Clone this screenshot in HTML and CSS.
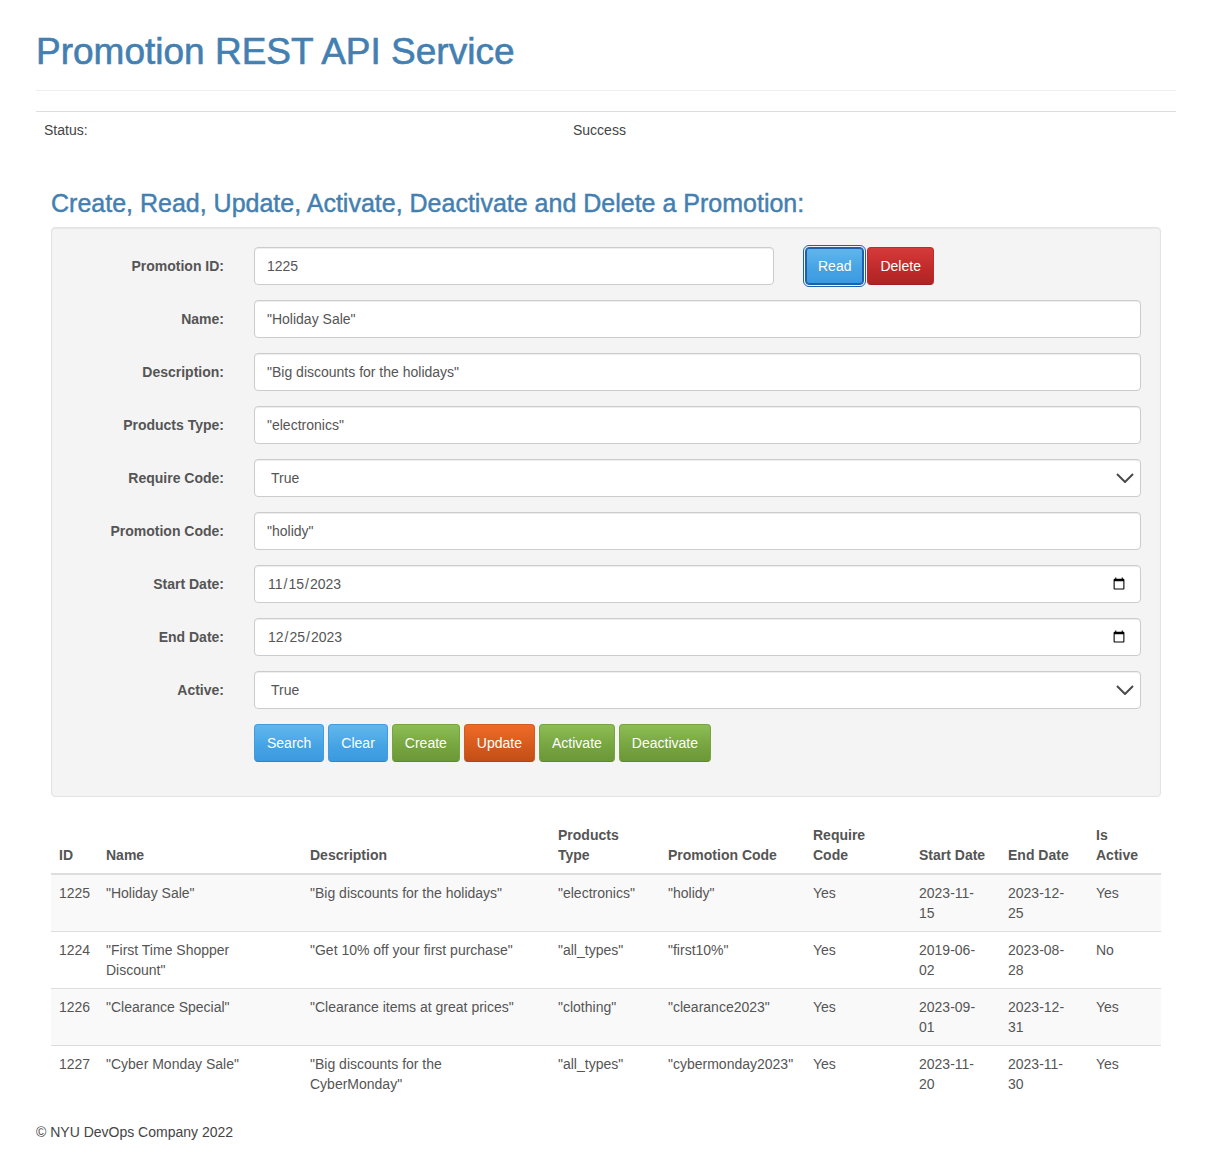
FILE: index.html
```html
<!DOCTYPE html>
<html lang="en">
<head>
<meta charset="utf-8">
<title>Promotion REST API Service</title>
<link rel="stylesheet" href="styles.css">
</head>
<body>
<div class="container">
  <div class="page-header">
    <h1>Promotion REST API Service</h1>
  </div>

  <div class="status-table">
    <div class="status-cell status-label">Status:</div>
    <div class="status-cell">Success</div>
  </div>

  <h3 class="section-title">Create, Read, Update, Activate, Deactivate and Delete a Promotion:</h3>

  <div class="well">
    <form class="form-horizontal">
      <div class="form-group">
        <label class="control-label" for="promo_id">Promotion ID:</label>
        <div class="control id-control">
          <input id="promo_id" class="form-control" type="text" value="1225">
        </div>
        <div class="id-buttons">
          <button type="button" class="btn btn-primary btn-focused">Read</button>
          <button type="button" class="btn btn-danger">Delete</button>
        </div>
      </div>

      <div class="form-group">
        <label class="control-label" for="promo_name">Name:</label>
        <div class="control">
          <input id="promo_name" class="form-control" type="text" value="&quot;Holiday Sale&quot;">
        </div>
      </div>

      <div class="form-group">
        <label class="control-label" for="promo_desc">Description:</label>
        <div class="control">
          <input id="promo_desc" class="form-control" type="text" value="&quot;Big discounts for the holidays&quot;">
        </div>
      </div>

      <div class="form-group">
        <label class="control-label" for="promo_type">Products Type:</label>
        <div class="control">
          <input id="promo_type" class="form-control" type="text" value="&quot;electronics&quot;">
        </div>
      </div>

      <div class="form-group">
        <label class="control-label" for="promo_req">Require Code:</label>
        <div class="control select-wrap">
          <select id="promo_req" class="form-control form-select">
            <option selected>True</option>
            <option>False</option>
          </select>
          <svg class="chevron" width="18" height="10" viewBox="0 0 18 10"><path d="M1 1 L9 9 L17 1" fill="none" stroke="#4a4a4a" stroke-width="2"/></svg>
        </div>
      </div>

      <div class="form-group">
        <label class="control-label" for="promo_code">Promotion Code:</label>
        <div class="control">
          <input id="promo_code" class="form-control" type="text" value="&quot;holidy&quot;">
        </div>
      </div>

      <div class="form-group">
        <label class="control-label" for="promo_start">Start Date:</label>
        <div class="control">
          <input id="promo_start" class="form-control" type="date" value="2023-11-15">
        </div>
      </div>

      <div class="form-group">
        <label class="control-label" for="promo_end">End Date:</label>
        <div class="control">
          <input id="promo_end" class="form-control" type="date" value="2023-12-25">
        </div>
      </div>

      <div class="form-group">
        <label class="control-label" for="promo_active">Active:</label>
        <div class="control select-wrap">
          <select id="promo_active" class="form-control form-select">
            <option selected>True</option>
            <option>False</option>
          </select>
          <svg class="chevron" width="18" height="10" viewBox="0 0 18 10"><path d="M1 1 L9 9 L17 1" fill="none" stroke="#4a4a4a" stroke-width="2"/></svg>
        </div>
      </div>

      <div class="form-group button-row">
        <button type="button" class="btn btn-primary">Search</button>
        <button type="button" class="btn btn-primary">Clear</button>
        <button type="button" class="btn btn-success">Create</button>
        <button type="button" class="btn btn-warning">Update</button>
        <button type="button" class="btn btn-success">Activate</button>
        <button type="button" class="btn btn-success">Deactivate</button>
      </div>
    </form>
  </div>

  <table class="results">
    <colgroup>
      <col class="c-id"><col class="c-name"><col class="c-desc"><col class="c-type"><col class="c-code"><col class="c-req"><col class="c-start"><col class="c-end"><col class="c-active">
    </colgroup>
    <thead>
      <tr>
        <th>ID</th>
        <th>Name</th>
        <th>Description</th>
        <th class="th-wrap">Products Type</th>
        <th>Promotion Code</th>
        <th class="th-wrap">Require Code</th>
        <th>Start Date</th>
        <th>End Date</th>
        <th class="th-wrap">Is Active</th>
      </tr>
    </thead>
    <tbody>
      <tr>
        <td>1225</td>
        <td class="td-name">"Holiday Sale"</td>
        <td class="td-desc">"Big discounts for the holidays"</td>
        <td>"electronics"</td>
        <td>"holidy"</td>
        <td>Yes</td>
        <td class="td-date">2023-11-15</td>
        <td class="td-date">2023-12-25</td>
        <td>Yes</td>
      </tr>
      <tr>
        <td>1224</td>
        <td class="td-name">"First Time Shopper Discount"</td>
        <td class="td-desc">"Get 10% off your first purchase"</td>
        <td>"all_types"</td>
        <td>"first10%"</td>
        <td>Yes</td>
        <td class="td-date">2019-06-02</td>
        <td class="td-date">2023-08-28</td>
        <td>No</td>
      </tr>
      <tr>
        <td>1226</td>
        <td class="td-name">"Clearance Special"</td>
        <td class="td-desc">"Clearance items at great prices"</td>
        <td>"clothing"</td>
        <td>"clearance2023"</td>
        <td>Yes</td>
        <td class="td-date">2023-09-01</td>
        <td class="td-date">2023-12-31</td>
        <td>Yes</td>
      </tr>
      <tr>
        <td>1227</td>
        <td class="td-name">"Cyber Monday Sale"</td>
        <td class="td-desc">"Big discounts for the CyberMonday"</td>
        <td>"all_types"</td>
        <td>"cybermonday2023"</td>
        <td>Yes</td>
        <td class="td-date">2023-11-20</td>
        <td class="td-date">2023-11-30</td>
        <td>Yes</td>
      </tr>
    </tbody>
  </table>

  <footer class="footer">&copy; NYU DevOps Company 2022</footer>
</div>
</body>
</html>
```

FILE: styles.css
```css
* {
  box-sizing: border-box;
}

html, body {
  margin: 0;
  padding: 0;
  background: #ffffff;
}

body {
  font-family: "Liberation Sans", Arial, Helvetica, sans-serif;
  font-size: 14px;
  line-height: 20px;
  color: #555555;
}

.container {
  width: 1140px;
  margin-left: 36px;
}

.page-header {
  padding-top: 31px;
  padding-bottom: 18px;
  border-bottom: 1px solid #eeeeee;
}

.page-header h1 {
  margin: 0;
  font-size: 37px;
  line-height: 41px;
  font-weight: normal;
  color: #4380b1;
  -webkit-text-stroke: 0.6px #4380b1;
}

.status-table {
  margin-top: 20px;
  display: grid;
  grid-template-columns: 529px 1fr;
  border-top: 1px solid #dddddd;
}

.status-cell {
  padding: 8px;
  color: #444444;
}

.section-title {
  margin: 42px 15px 10px;
  font-size: 25px;
  line-height: 27px;
  font-weight: normal;
  color: #4380b1;
  -webkit-text-stroke: 0.45px #4380b1;
}

.well {
  margin: 0 15px 20px;
  padding: 19px;
  background: #f4f4f4;
  border: 1px solid #e3e3e3;
  border-radius: 4px;
  box-shadow: inset 0 1px 1px rgba(0, 0, 0, 0.05);
}

.form-horizontal {
  margin: 0;
}

.form-group {
  display: flex;
  align-items: center;
  gap: 30px;
  margin-bottom: 15px;
}

.control-label {
  width: 153px;
  flex: none;
  text-align: right;
  font-weight: bold;
  color: #555555;
}

.control {
  flex: 1;
  min-width: 0;
}

.id-control {
  flex: none;
  width: 520px;
}

.id-buttons {
  display: flex;
  gap: 3px;
  margin-left: 1px;
}

.form-control {
  display: block;
  width: 100%;
  height: 38px;
  padding: 8px 12px;
  font-family: "Liberation Sans", Arial, Helvetica, sans-serif;
  font-size: 14px;
  line-height: 20px;
  color: #555555;
  background: #ffffff;
  border: 1px solid #cccccc;
  border-radius: 4px;
  box-shadow: inset 0 1px 1px rgba(0, 0, 0, 0.075);
  margin: 0;
}

.select-wrap {
  position: relative;
}

.form-select {
  -webkit-appearance: none;
  appearance: none;
  padding-left: 16px;
  padding-right: 40px;
}

.chevron {
  position: absolute;
  right: 7px;
  top: 14px;
  pointer-events: none;
}

.button-row {
  gap: 4px;
  padding-left: 183px;
}

.btn {
  display: inline-block;
  height: 38px;
  padding: 8px 12px;
  font-family: "Liberation Sans", Arial, Helvetica, sans-serif;
  font-size: 14px;
  line-height: 20px;
  color: #ffffff;
  border: 1px solid transparent;
  border-radius: 4px;
  text-shadow: 0 1px 0 rgba(0, 0, 0, 0.05);
  cursor: pointer;
  white-space: nowrap;
}

.btn-primary {
  background-image: linear-gradient(#61b7ec, #45a3e4 60%, #3b99df);
  border-color: #3f9ce0;
  border-bottom-color: #2a86cc;
}

.btn-success {
  background-image: linear-gradient(#8dbd55, #76a43f 60%, #6c9838);
  border-color: #76a43f;
  border-bottom-color: #5e8a2e;
}

.btn-warning {
  background-image: linear-gradient(#ef6a26, #d45a1c 60%, #c24e17);
  border-color: #d45a1c;
  border-bottom-color: #b04614;
}

.btn-danger {
  background-image: linear-gradient(#d63a3a, #bf2a2a 60%, #ae2424);
  border-color: #bf2a2a;
  border-bottom-color: #a01e1e;
}

.btn-focused {
  border-color: #1f5fae;
  box-shadow: inset 0 0 0 1px #1f5fae;
  outline: 1px solid #1f5fae;
  outline-offset: 1px;
}

.results {
  width: 1110px;
  margin: 0 15px 20px;
  border-collapse: collapse;
  border-spacing: 0;
  table-layout: fixed;
}

.c-id { width: 47px; }
.c-name { width: 204px; }
.c-desc { width: 248px; }
.c-type { width: 110px; }
.c-code { width: 145px; }
.c-req { width: 106px; }
.c-start { width: 89px; }
.c-end { width: 88px; }
.c-active { width: 73px; }

.results th {
  padding: 8px;
  text-align: left;
  vertical-align: bottom;
  font-weight: bold;
  color: #555555;
  border-bottom: 2px solid #dddddd;
}

.results th.th-wrap {
  padding-right: 20px;
}

.results td {
  padding: 8px;
  vertical-align: top;
  border-top: 1px solid #dddddd;
  color: #555555;
}

.results td.td-name {
  padding-right: 14px;
}

.results td.td-desc {
  padding-right: 25px;
}

.results td.td-date {
  padding-right: 20px;
}

.results tbody tr:nth-child(odd) {
  background: #f9f9f9;
}

.footer {
  color: #444444;
  padding-bottom: 24px;
}
```
